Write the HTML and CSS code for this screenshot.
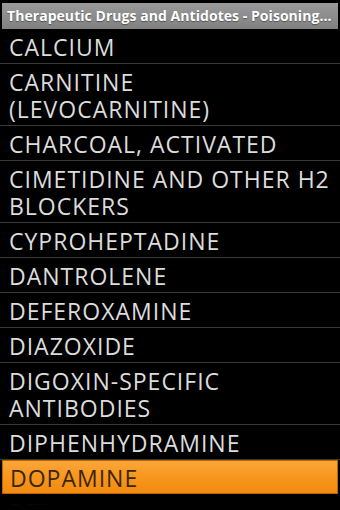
FILE: index.html
```html
<!DOCTYPE html>
<html lang="en">
<head>
  <meta charset="UTF-8" />
  <meta name="viewport" content="width=device-width, initial-scale=1.0"/>
  <title>Therapeutic Drugs and Antidotes - Poisoning</title>
  <link rel="stylesheet" href="styles.css">
</head>
<body>

  <!-- title bar -->
  <div class="title-bar">Therapeutic Drugs and Antidotes - Poisoning...</div>

  <!-- drug list -->
  <ul class="drug-list">
    <li class="drug-item">CALCIUM</li>
    <li class="drug-item">CARNITINE (LEVOCARNITINE)</li>
    <li class="drug-item">CHARCOAL, ACTIVATED</li>
    <li class="drug-item">CIMETIDINE AND OTHER H2 BLOCKERS</li>
    <li class="drug-item">CYPROHEPTADINE</li>
    <li class="drug-item">DANTROLENE</li>
    <li class="drug-item">DEFEROXAMINE</li>
    <li class="drug-item">DIAZOXIDE</li>
    <li class="drug-item">DIGOXIN-SPECIFIC ANTIBODIES</li>
    <li class="drug-item">DIPHENHYDRAMINE</li>
    <li class="drug-item selected">DOPAMINE</li>
    <li class="drug-item">DTPA</li>
  </ul>

</body>
</html>
```

FILE: styles.css
```css
html, body {
  height: 100%;
}

body {
  font-family: "Open Sans", "DejaVu Sans", sans-serif;
  background-color: #000;
  margin: 0;
  padding: 0;
  overflow: hidden;
}

/* list fading edge at the bottom */
body::after {
  content: "";
  position: fixed;
  left: 0;
  right: 0;
  bottom: 0;
  height: 16px;
  background: linear-gradient(rgba(0,0,0,0.6), #000 70%);
}

.title-bar {
  margin: 3px 2px 0 2px;
  height: 26px;
  line-height: 26px;
  padding: 0 5px;
  background: linear-gradient(#9a9a9a, #808080);
  color: #fff;
  font-size: 14px;
  font-weight: bold;
  letter-spacing: 0.05px;
  white-space: nowrap;
  overflow: hidden;
  text-shadow: 0 1px 1px rgba(0,0,0,0.4);
}

.drug-list {
  list-style: none;
  margin: 0;
  padding: 0;
}

.drug-item {
  padding: 5px 4px 2px 9px;
  font-size: 23px;
  line-height: 27px;
  letter-spacing: 1px;
  color: #dcdcdc;
  border-bottom: 1px solid #3a3a3a;
}

/* selected row */
.drug-item.selected {
  margin: 0 2px;
  padding-left: 7px;
  color: #3a2608;
  background: linear-gradient(#fba63a, #f7961d 50%, #f28a10);
  border: 1px solid #b86400;
  padding-top: 4px;
  padding-bottom: 1px;
}
```
